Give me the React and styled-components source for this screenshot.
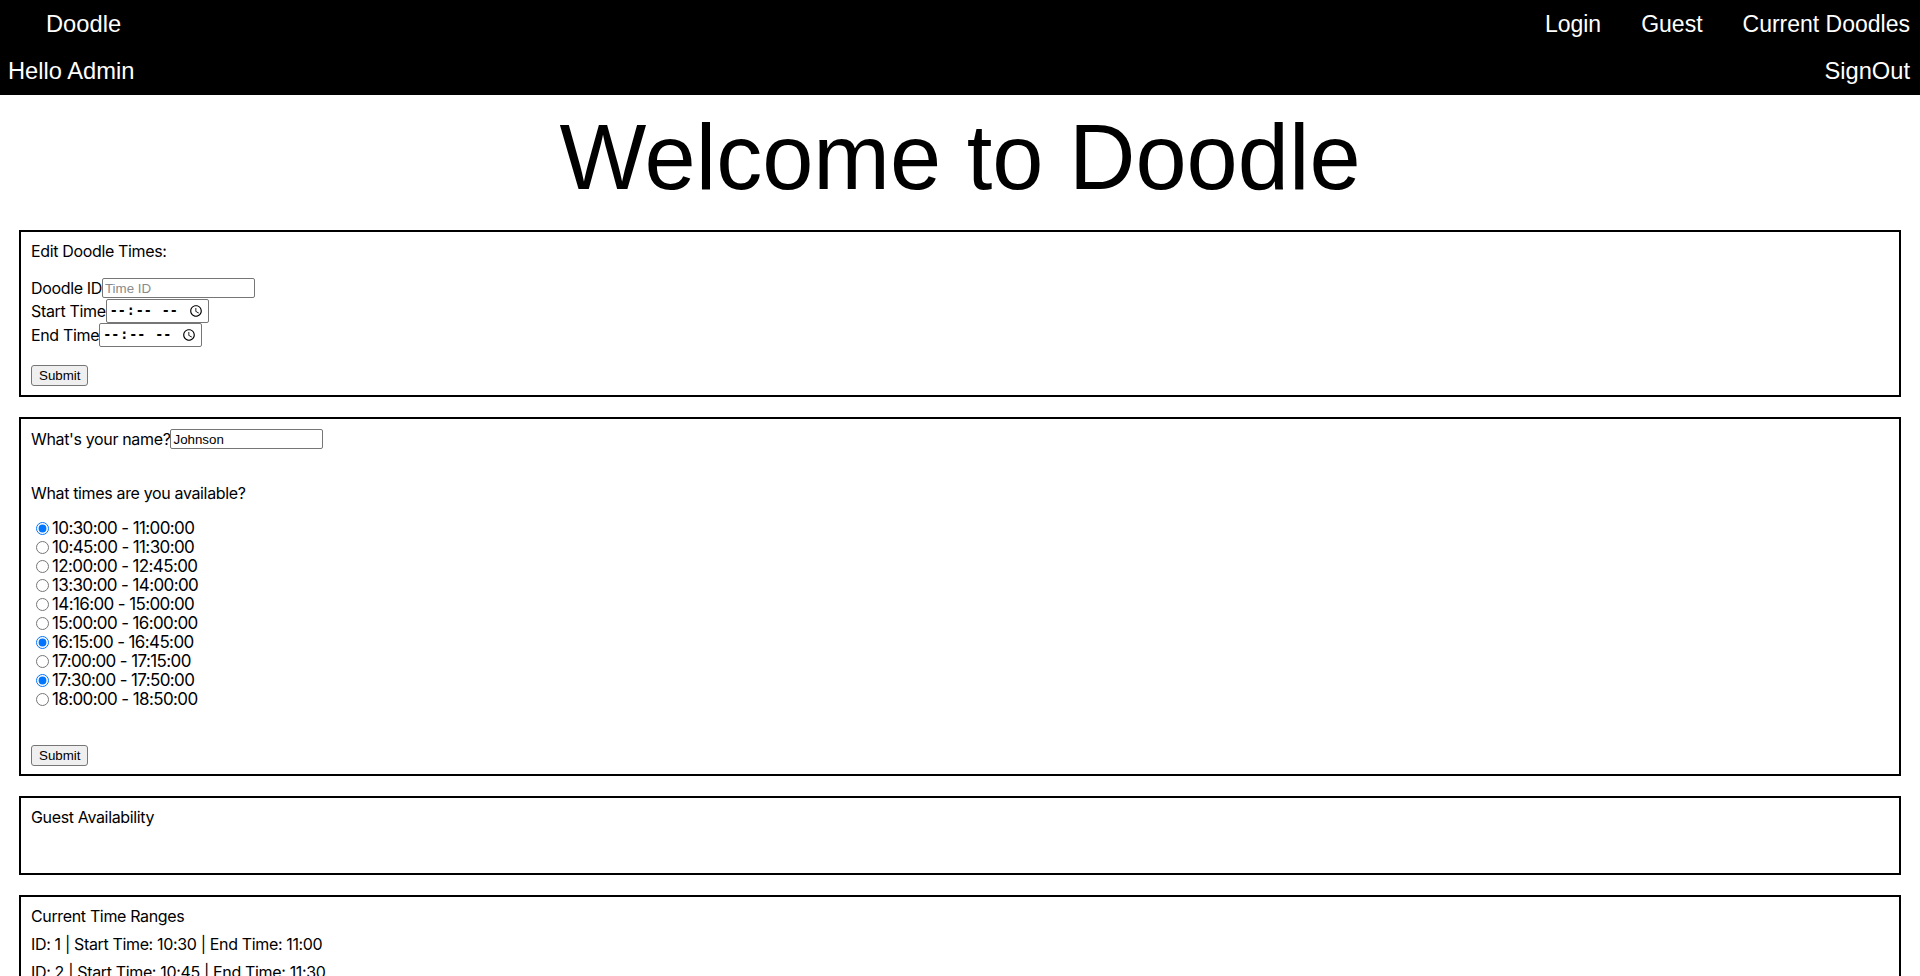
import React from 'react';
import styled, { createGlobalStyle } from 'styled-components';

const GlobalStyle = createGlobalStyle`
  body {
    margin: 0;
    background: #fff;
    color: #000;
    font-family: Inter, "Noto Sans", sans-serif;
  }
`;

const TopBar = styled.header`
  background-color: #000;
  color: #fff;
  font-family: "Liberation Sans", Arial, sans-serif;
  font-size: 23.7px;
`;

const BarRow = styled.div`
  display: flex;
  align-items: center;
  justify-content: space-between;
  height: ${p => p.$height}px;
  padding: 0 10px 0 ${p => p.$left}px;
`;

const NavLinks = styled.nav`
  display: flex;
  gap: 40px;
  font-size: 23px;
`;

const NavLink = styled.a`
  color: #fff;
  text-decoration: none;
  cursor: pointer;
`;

const Title = styled.h1`
  margin: 9px 0 20px;
  text-align: center;
  font-family: "Liberation Sans", Arial, sans-serif;
  font-size: 92px;
  font-weight: 400;
  line-height: 106px;
`;

const Panel = styled.section`
  margin: 0 19px 20px;
  border: 2px solid #000;
  padding: 10px 10px ${p => p.$bottom ?? 10}px;
  font-size: 16px;
  letter-spacing: -0.35px;
  line-height: 19px;
  min-height: ${p => p.$minHeight || 0}px;
`;

const PanelHeading = styled.div`
  margin-bottom: ${p => p.$gap || 0}px;
`;

const FieldRow = styled.label`
  display: flex;
  align-items: center;
  margin-bottom: ${p => p.$gap || 0}px;
`;

const TextInput = styled.input`
  box-sizing: border-box;
  width: 153px;
  height: 20px;
  margin: 0;
  padding: 1px 2px;
  border: 1px solid #767676;
  border-radius: 2px;
  font: 13.33px "Liberation Sans", Arial, sans-serif;
  letter-spacing: 0;
  color: #000;

  &::placeholder {
    color: #8a8a8a;
  }
`;

const TimeInput = styled.input.attrs({ type: 'time' })`
  box-sizing: border-box;
  width: 103px;
  height: 24px;
  margin: 0;
  padding: 1px 2px;
  border: 1px solid #767676;
  border-radius: 2px;
  font-family: "DejaVu Sans Mono", monospace;
  font-size: 13.33px;
  font-weight: 700;
  letter-spacing: 0;
  color: #000;
  background: #fff;
`;

const Question = styled.div`
  margin-top: ${p => p.$top || 0}px;
`;

const SlotList = styled.div`
  margin-top: 16px;
`;

const SlotRow = styled.label`
  display: flex;
  align-items: center;
  height: 19px;
  font-size: 17px;
  letter-spacing: -0.62px;
`;

const Radio = styled.input.attrs({ type: 'radio' })`
  width: 13px;
  height: 13px;
  margin: 0 3px 0 5px;
`;

const SubmitButton = styled.button`
  display: block;
  box-sizing: border-box;
  height: 21px;
  margin-top: ${p => p.$top}px;
  padding: 1px 7px;
  border: 1px solid #767676;
  border-radius: 3px;
  background: #efefef;
  color: #000;
  font: 13.33px "Liberation Sans", Arial, sans-serif;
  letter-spacing: 0;
`;

const RangeList = styled.div`
  display: flex;
  flex-direction: column;
  gap: 9px;
  margin-top: 9px;
`;

const slots = [
  ['10:30', '11:00', true],
  ['10:45', '11:30', false],
  ['12:00', '12:45', false],
  ['13:30', '14:00', false],
  ['14:16', '15:00', false],
  ['15:00', '16:00', false],
  ['16:15', '16:45', true],
  ['17:00', '17:15', false],
  ['17:30', '17:50', true],
  ['18:00', '18:50', false],
];

export default function App() {
  return (
    <>
      <GlobalStyle />
      <TopBar>
        <BarRow $height={48} $left={46}>
          <span>Doodle</span>
          <NavLinks>
            <NavLink>Login</NavLink>
            <NavLink>Guest</NavLink>
            <NavLink>Current Doodles</NavLink>
          </NavLinks>
        </BarRow>
        <BarRow $height={47} $left={8}>
          <span>Hello Admin</span>
          <NavLink>SignOut</NavLink>
        </BarRow>
      </TopBar>

      <Title>Welcome to Doodle</Title>

      <Panel $bottom={9}>
        <PanelHeading $gap={17}>Edit Doodle Times:</PanelHeading>
        <FieldRow $gap={1}>
          Doodle ID<TextInput type="text" placeholder="Time ID" />
        </FieldRow>
        <FieldRow>
          Start Time<TimeInput />
        </FieldRow>
        <FieldRow>
          End Time<TimeInput />
        </FieldRow>
        <SubmitButton $top={18}>Submit</SubmitButton>
      </Panel>

      <Panel $bottom={8}>
        <FieldRow>
          What's your name?<TextInput type="text" defaultValue="Johnson" />
        </FieldRow>
        <Question $top={35}>What times are you available?</Question>
        <SlotList>
          {slots.map(([start, end, checked], i) => (
            <SlotRow key={start}>
              <Radio name={`slot-${i}`} defaultChecked={checked} />
              {start}:00 - {end}:00
            </SlotRow>
          ))}
        </SlotList>
        <SubmitButton $top={36}>Submit</SubmitButton>
      </Panel>

      <Panel $minHeight={55}>
        <PanelHeading>Guest Availability</PanelHeading>
      </Panel>

      <Panel>
        <PanelHeading>Current Time Ranges</PanelHeading>
        <RangeList>
          {slots.map(([start, end], i) => (
            <div key={start}>
              ID: {i + 1} | Start Time: {start} | End Time: {end}
            </div>
          ))}
        </RangeList>
      </Panel>
    </>
  );
}
